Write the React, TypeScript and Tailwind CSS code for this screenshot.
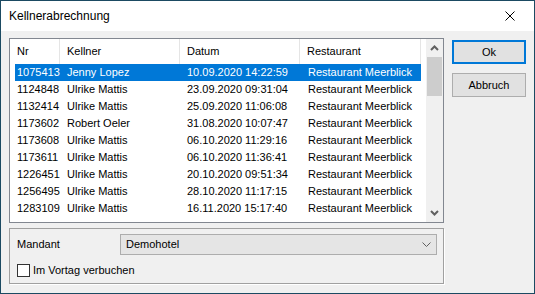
import React from 'react';

const rows = [
  ['1075413', 'Jenny Lopez', '10.09.2020 14:22:59'],
  ['1124848', 'Ulrike Mattis', '23.09.2020 09:31:04'],
  ['1132414', 'Ulrike Mattis', '25.09.2020 11:06:08'],
  ['1173602', 'Robert Oeler', '31.08.2020 10:07:47'],
  ['1173608', 'Ulrike Mattis', '06.10.2020 11:29:16'],
  ['1173611', 'Ulrike Mattis', '06.10.2020 11:36:41'],
  ['1226451', 'Ulrike Mattis', '20.10.2020 09:51:34'],
  ['1256495', 'Ulrike Mattis', '28.10.2020 11:17:15'],
  ['1283109', 'Ulrike Mattis', '16.11.2020 15:17:40'],
];

function Chevron({ up }: { up?: boolean }) {
  return (
    <svg width="9" height="6" viewBox="0 0 9 6">
      <path
        d={up ? 'M1 5 L4.5 1.5 L8 5' : 'M1 1 L4.5 4.5 L8 1'}
        fill="none"
        stroke="#606060"
        strokeWidth="2"
      />
    </svg>
  );
}

export default function App() {
  return (
    <div
      className="w-[535px] h-[294px] border border-[#1b4a62] flex flex-col bg-[#f0f0f0] text-[11px] text-black overflow-hidden"
      style={{ fontFamily: '"Liberation Sans", Arial, sans-serif' }}
    >
      {/* Title bar */}
      <div className="h-[30px] bg-white flex items-center justify-between pl-[8px] pr-[19px]">
        <span className="text-[12px] text-black">Kellnerabrechnung</span>
        <svg width="10" height="10" viewBox="0 0 10 10">
          <path d="M0.5 0.5 L9.5 9.5 M9.5 0.5 L0.5 9.5" stroke="#000" strokeWidth="1" />
        </svg>
      </div>

      <div className="flex-1 flex pt-[7px] pl-[8px] gap-[8px]">
        {/* Left column */}
        <div className="w-[435px] flex flex-col gap-[5px]">
          {/* List view */}
          <div className="h-[185px] border border-[#828790] bg-white flex">
            <div className="flex-1 flex flex-col">
              <div className="h-[25px] flex">
                <div className="w-[50px] pl-[7px] border-r border-[#e5e5e5] flex items-center">Nr</div>
                <div className="w-[120px] pl-[7px] border-r border-[#e5e5e5] flex items-center">Kellner</div>
                <div className="w-[120px] pl-[7px] border-r border-[#e5e5e5] flex items-center">Datum</div>
                <div className="w-[121px] pl-[7px] border-r border-[#e5e5e5] flex items-center">Restaurant</div>
              </div>
              <div className="flex flex-col">
                {rows.map((r, i) => (
                  <div
                    key={r[0]}
                    className={`ml-[5px] w-[406px] h-[17px] flex items-center ${
                      i === 0 ? 'bg-[#0078d7] text-white' : ''
                    }`}
                  >
                    <div className="w-[45px] pl-[2px]">{r[0]}</div>
                    <div className="w-[120px] pl-[7px]">{r[1]}</div>
                    <div className="w-[120px] pl-[7px]">{r[2]}</div>
                    <div className="w-[121px] pl-[8px]">Restaurant Meerblick</div>
                  </div>
                ))}
              </div>
            </div>
            {/* Scrollbar */}
            <div className="w-[17px] bg-[#f0f0f0] flex flex-col">
              <div className="h-[18px] flex items-center justify-center">
                <Chevron up />
              </div>
              <div className="mx-[1px] h-[39px] bg-[#cdcdcd]" />
              <div className="flex-1" />
              <div className="h-[18px] flex items-center justify-center">
                <Chevron />
              </div>
            </div>
          </div>

          {/* Group box */}
          <div className="h-[56px] border border-[#a0a0a0] shadow-[1px_1px_0_#ffffff] flex flex-col pt-[5px] pl-[7px] pr-[6px]">
            <div className="flex items-center h-[21px]">
              <span className="w-[103px]">Mandant</span>
              <div className="flex-1 h-[21px] bg-[#e5e5e5] border border-[#adadad] flex items-center justify-between pl-[5px] pr-[5px]">
                <span>Demohotel</span>
                <svg width="9" height="6" viewBox="0 0 9 6">
                  <path d="M0.5 0.5 L4.5 4.5 L8.5 0.5" fill="none" stroke="#606060" strokeWidth="1" />
                </svg>
              </div>
            </div>
            <div className="flex items-center mt-[7px]">
              <div className="w-[13px] h-[13px] bg-white border border-[#333333]" />
              <span className="ml-[3px]">Im Vortag verbuchen</span>
            </div>
          </div>
        </div>

        {/* Buttons */}
        <div className="w-[74px] flex flex-col pt-[2px] gap-[9px]">
          <button className="h-[24px] bg-[#e1e1e1] border-2 border-[#0078d7] flex items-center justify-center">
            Ok
          </button>
          <button className="h-[24px] bg-[#e1e1e1] border border-[#adadad] flex items-center justify-center">
            Abbruch
          </button>
        </div>
      </div>
    </div>
  );
}
